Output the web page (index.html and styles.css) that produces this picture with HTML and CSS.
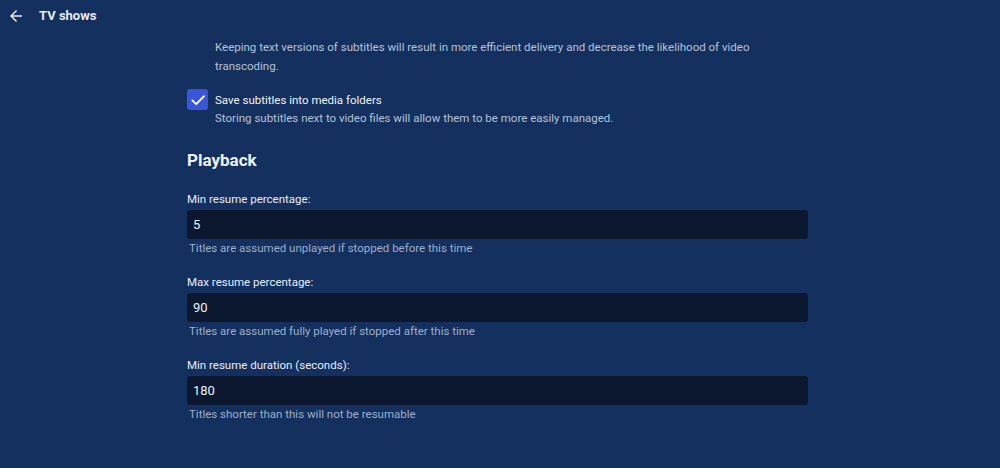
FILE: index.html
```html
<!DOCTYPE html>
<html>
<head>
<meta charset="utf-8">
<link rel="stylesheet" href="styles.css">
</head>
<body>
<header class="topbar">
  <svg class="back" width="18" height="18" viewBox="0 0 24 24"><path d="M20 11H7.83l5.59-5.59L12 4l-8 8 8 8 1.41-1.41L7.83 13H20v-2z" fill="#e6ecf5"/></svg>
  <span class="title">TV shows</span>
</header>
<main class="content">
  <div class="desc indent">Keeping text versions of subtitles will result in more efficient delivery and decrease the likelihood of video transcoding.</div>
  <div class="check-row">
    <span class="checkbox"><svg width="18" height="18" viewBox="0 0 24 24"><path d="M4.5 12.5l5 5L20 7" fill="none" stroke="#fff" stroke-width="2.4" stroke-linecap="round" stroke-linejoin="round"/></svg></span>
    <div class="check-text">
      <div class="check-label">Save subtitles into media folders</div>
      <div class="desc">Storing subtitles next to video files will allow them to be more easily managed.</div>
    </div>
  </div>
  <h2 class="heading">Playback</h2>
  <div class="field">
    <label class="label">Min resume percentage:</label>
    <div class="input">5</div>
    <div class="help">Titles are assumed unplayed if stopped before this time</div>
  </div>
  <div class="field">
    <label class="label">Max resume percentage:</label>
    <div class="input">90</div>
    <div class="help">Titles are assumed fully played if stopped after this time</div>
  </div>
  <div class="field">
    <label class="label">Min resume duration (seconds):</label>
    <div class="input">180</div>
    <div class="help">Titles shorter than this will not be resumable</div>
  </div>
</main>
</body>
</html>
```
FILE: styles.css
```css
html, body {
  margin: 0;
  padding: 0;
  background: #14305f;
  font-family: Roboto, "Liberation Sans", sans-serif;
  color: #e6ecf5;
  height: 100%;
  overflow: hidden;
}
.topbar {
  display: flex;
  align-items: center;
  height: 31px;
  padding-left: 7px;
}
.back {
  display: block;
}
.title {
  margin-left: 14px;
  font-size: 13px;
  font-weight: 700;
  color: #e6ecf5;
}
.content {
  width: 621px;
  margin-left: 187px;
  padding-top: 7px;
}
.desc {
  font-size: 11.5px;
  line-height: 19px;
  color: #b6c2d8;
}
.indent {
  padding-left: 28px;
}
.check-row {
  display: flex;
  align-items: flex-start;
  margin-top: 13px;
}
.checkbox {
  width: 21px;
  height: 21px;
  border-radius: 3px;
  background: #3a55d8;
  display: flex;
  align-items: center;
  justify-content: center;
  flex: none;
}
.check-text {
  margin-left: 7px;
  padding-top: 3px;
}
.check-label {
  font-size: 11.5px;
  line-height: 17px;
  color: #f0f3f8;
}
.heading {
  font-size: 17px;
  font-weight: 700;
  margin: 21px 0 0 0;
  line-height: 22px;
  color: #eef2f8;
}
.field {
  margin-top: 20px;
}
.field + .field {
  margin-top: 18px;
}
.label {
  display: block;
  font-size: 11.5px;
  line-height: 16px;
  color: #e6ecf5;
}
.input {
  margin-top: 3px;
  height: 29px;
  box-sizing: border-box;
  background: #0b1830;
  border-radius: 3px;
  font-size: 13px;
  line-height: 29px;
  padding-left: 6px;
  color: #f0f3f8;
}
.help {
  font-size: 11.5px;
  line-height: 16px;
  margin-top: 1px;
  padding-left: 2px;
  color: #9eaec9;
}
```
